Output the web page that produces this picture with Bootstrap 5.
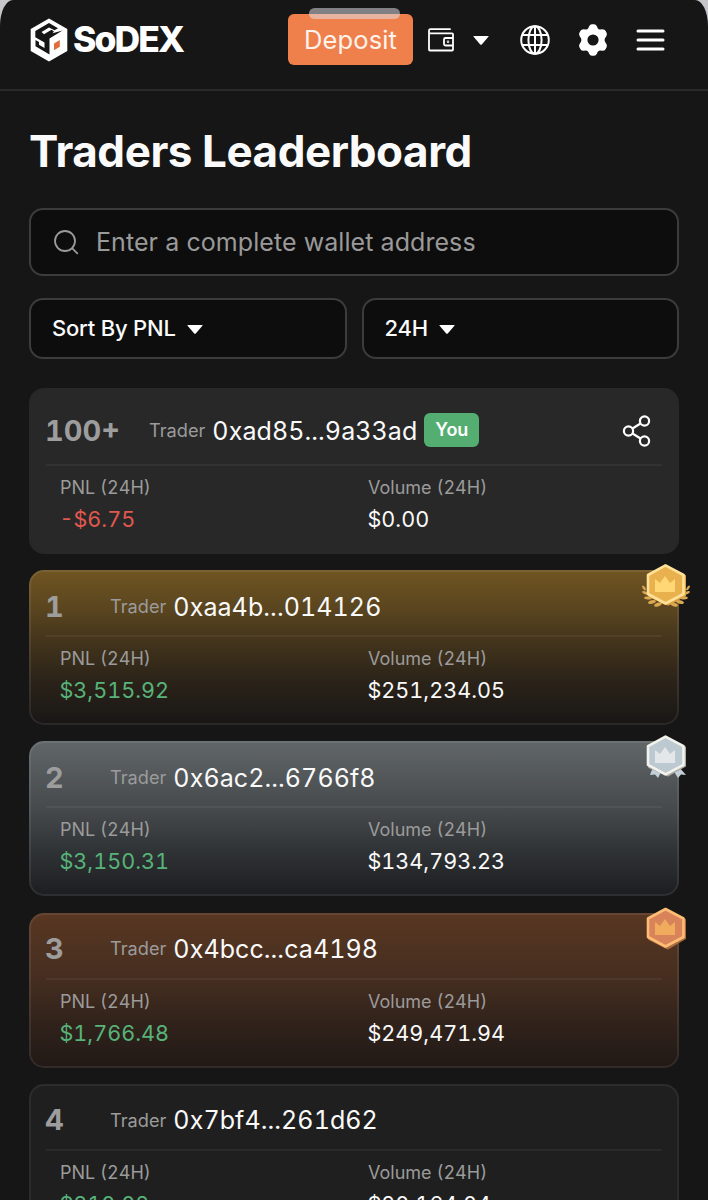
<!DOCTYPE html>
<html lang="en">
<head>
<meta charset="utf-8">
<meta name="viewport" content="width=device-width, initial-scale=1">
<title>SoDEX – Traders Leaderboard</title>
<link href="https://cdn.jsdelivr.net/npm/bootstrap@5.3.0/dist/css/bootstrap.min.css" rel="stylesheet">
<style>
html{background:#c6c5ca}
body{font-family:Inter,"Liberation Sans",sans-serif;background:#c6c5ca;color:#fafafa;height:1200px;overflow:hidden}
svg{display:block;flex:none}
.app{background:#161616;height:1200px;overflow:hidden;border-radius:13px 13px 0 0/26px 26px 0 0}
.topbar{height:91px;padding:0 43px 9px 30px;border-bottom:2px solid #2a2a2a}
.brand{font-weight:800;font-size:35.5px;letter-spacing:-1.9px;line-height:40px;color:#fff;margin-left:5px}
.deposit{position:relative;width:125px;height:51px;margin-top:-1px;background:#ef804b;color:#fdf3ec;border:0;border-radius:6px;font-size:25.5px;padding:0;line-height:51px;letter-spacing:.1px}
.grabber{position:absolute;left:21px;top:-6px;width:91px;height:11px;border-radius:6px;background:rgba(226,226,236,.52)}
.wallet{margin-left:15px}.open{margin-left:19px}.globe{margin-left:31px}.gear{margin-left:27px}.menu{margin-left:27px}
.page{padding:0 29px}
h1{font-size:44px;font-weight:700;line-height:54px;margin:33px 0 30px;letter-spacing:-.46px;white-space:nowrap}
.field{background:#0d0d0d;border:2px solid #3c3c3c;border-radius:14px}
.search{height:68px;padding-left:22px;font-size:25px;color:#9a9a9a}
.search span{margin-left:16px;padding-top:2px;letter-spacing:.07px}
.filters{gap:15px;margin:22px 0 29px}
.filters .field{height:61px;padding-left:21px;font-size:22px;font-weight:500;letter-spacing:-.2px;color:#fafafa}
.filters svg{margin-left:11px;margin-top:1px}
.trader{position:relative;height:155px;border:2px solid #2c2c2c;border-radius:15px;background:#1f1f1f;padding:0 15px;margin-bottom:16.25px;font-feature-settings:"tnum"}
.trader.me{height:166px;background:#282828;border-color:#282828;margin-bottom:16px}
.head{height:65px;padding-top:6px;border-bottom:2px solid rgba(255,255,255,.05)}
.me .head{height:76px;padding-top:8px}
.rank{font-weight:700;font-size:29px;min-width:36px;margin-left:-1px;margin-right:29px;color:#9d9d9d;line-height:34px}
.role{font-size:18.2px;color:#9b9b9b;margin-right:7px}
.addr{font-size:25px;letter-spacing:.08px;line-height:30px}
.you{background:#54ae71;color:#fff;font-size:18px;font-weight:600;border-radius:6px;width:55px;height:34px;line-height:34px;text-align:center;margin-left:7px;margin-top:-2px}
.stats>div{padding-left:14px}
.cap{font-size:18px;line-height:24px;color:#9b9b9b;margin-top:10px}
.val{font-size:21.6px;line-height:28px;margin-top:5px;margin-left:-.5px}
.up{color:#57b379}.down{color:#e0584f}
.gold,.silver,.bronze{border-color:rgba(255,255,255,.08)}
.gold{background:linear-gradient(#705522,#5a451f 25%,#44351c 45%,#2b2319 72%,#181616) border-box}
.silver{background:linear-gradient(#616669,#45494b 45%,#2f3234 72%,#1c1d20) border-box}
.bronze{background:linear-gradient(#593722,#452e20 42%,#30221b 72%,#211916) border-box}
.medal{position:absolute;right:-14px;top:-9px}
</style>
</head>
<body>
<svg width="0" height="0" class="position-absolute">
<symbol id="caret" viewBox="0 0 16 9"><path d="M1 0h14q1 0 .4.8L9 8.200q-1 1-2 0L.6.8Q0 0 1 0z" fill="#fff"/></symbol>
<symbol id="crown" viewBox="0 0 20 16"><path d="M0 3l5 4 5-7 5 7 5-4v13H0z"/></symbol>
</svg>
<div class="app">
<header class="topbar d-flex align-items-center">
  <svg width="38" height="44" viewBox="0 0 38 44"><path d="M19 .5L37.300 11v22L19 43.500.7 33V11z" fill="#fff"/><path d="M19 5L28 10.200 24.500 12.200 19 9.600 11.500 14 14 16.200 21.500 11.800 24 13.500 22.500 15.300 32.500 12.600 19.500 20.500V36.500L5.500 28.300V22L9 24v2.800l5.500 3.200V24.600L5.300 19.200V13z" fill="#161616"/><path d="M24 25.400l5.800-3.400v6.800L24 32.200z" fill="#e26a3c"/></svg>
  <span class="brand">SoDEX</span>
  <button class="btn deposit ms-auto">Deposit<span class="grabber"></span></button>
  <svg class="wallet" width="26" height="24" viewBox="0 0 26 24" fill="none" stroke="#fff" stroke-width="1.800" stroke-linejoin="round" stroke-linecap="round"><path d="M22 1.200H2.500Q1 1.200 1 3v18.500q0 1 1 1h22q1 0 1-1V6.300q0-1-1-1H1.500M25 10h-7.500q-1.500 0-1.500 1.500V16q0 1.500 1.500 1.500H25"/><circle cx="20" cy="13.800" r=".4"/></svg>
  <svg class="open" width="16" height="9"><use href="#caret"/></svg>
  <svg class="globe" width="30" height="30" viewBox="0 0 30 30" fill="none" stroke="#fff" stroke-width="2"><circle cx="15" cy="15" r="13.800"/><ellipse cx="15" cy="15" rx="6.600" ry="13.800"/><path d="M15 1v28M2.300 10h25.400M2.300 20h25.400"/></svg>
  <svg class="gear" width="32" height="32" viewBox="0 0 32 32"><path d="M12 2.600Q13 .3 15 .3h2q2 0 3 2.300l.6 1.400q.8 1.600 2.600 1.500l2.300-.2q2.200 0 3 1.500l1 1.800q1 1.900-.2 3.600l-1.200 1.700q-1.200 2.100 0 4.200l1.200 1.700q1.200 1.700.2 3.600l-1 1.800q-.8 1.500-3 1.500l-2.300-.2q-1.800-.1-2.600 1.500L20 29.400q-1 2.300-3 2.300h-2q-2 0-3-2.300L11.400 28q-.8-1.600-2.600-1.500l-2.300.2q-2.200 0-3-1.500l-1-1.800q-1-1.900.2-3.600l1.200-1.700q1.200-2.100 0-4.200l-1.200-1.700q-1.200-1.700-.2-3.600l1-1.800q.8-1.500 3-1.500l2.300.2q1.800.1 2.600-1.500zM16 10.400a5.600 5.600 0 1 0 0 11.200 5.600 5.600 0 0 0 0-11.200z" fill="#fff" fill-rule="evenodd"/></svg>
  <svg class="menu" width="29" height="24" viewBox="0 0 29 24" stroke="#fff" stroke-width="3" stroke-linecap="round"><path d="M2 3h25M2 12h25M2 21h25"/></svg>
</header>
<main class="page">
  <h1>Traders Leaderboard</h1>
  <div class="field search d-flex align-items-center">
    <svg width="27" height="27" viewBox="0 0 27 27" fill="none" stroke="#9a9a9a" stroke-width="1.800" stroke-linecap="round"><circle cx="12" cy="12" r="10"/><path d="M19.300 19.300l5 5"/></svg>
    <span>Enter a complete wallet address</span>
  </div>
  <div class="filters d-flex">
    <div class="field d-flex align-items-center flex-fill w-50">Sort By PNL<svg width="16" height="9"><use href="#caret"/></svg></div>
    <div class="field d-flex align-items-center flex-fill w-50">24H<svg width="16" height="9"><use href="#caret"/></svg></div>
  </div>

  <section class="trader me">
    <div class="head d-flex align-items-center"><span class="rank">100+</span><span class="role">Trader</span><span class="addr">0xad85...9a33ad</span><span class="you">You</span>
      <svg class="ms-auto me-2" width="32" height="34" viewBox="0 0 32 34" fill="none" stroke="#fff" stroke-width="2.200"><circle cx="6.500" cy="17" r="4.600"/><circle cx="22.500" cy="7" r="4.600"/><circle cx="22.500" cy="27" r="4.600"/><path d="M10.500 14.500l8-5M10.500 19.500l8 5"/></svg></div>
    <div class="row g-0 stats"><div class="col-6"><div class="cap">PNL (24H)</div><div class="val down">-$6.75</div></div><div class="col-6"><div class="cap">Volume (24H)</div><div class="val">$0.00</div></div></div>
  </section>

  <section class="trader gold">
    <div class="head d-flex align-items-center"><span class="rank">1</span><span class="role">Trader</span><span class="addr">0xaa4b...014126</span></div>
    <div class="row g-0 stats"><div class="col-6"><div class="cap">PNL (24H)</div><div class="val up">$3,515.92</div></div><div class="col-6"><div class="cap">Volume (24H)</div><div class="val">$251,234.05</div></div></div>
    <svg class="medal" width="50" height="46" viewBox="0 0 50 46"><g fill="#dca951"><ellipse cx="3" cy="25" rx="2.800" ry="1.200" transform="rotate(55 3 25)"/><ellipse cx="4.500" cy="30" rx="3.600" ry="1.400" transform="rotate(25 4.500 30)"/><ellipse cx="7" cy="35" rx="3.800" ry="1.500" transform="rotate(5 7 35)"/><ellipse cx="11" cy="39" rx="4" ry="1.700" transform="rotate(-15 11 39)"/><ellipse cx="17" cy="41.500" rx="4" ry="1.800" transform="rotate(-20 17 41.500)"/><ellipse cx="47" cy="25" rx="2.800" ry="1.200" transform="rotate(-55 47 25)"/><ellipse cx="45.500" cy="30" rx="3.600" ry="1.400" transform="rotate(-25 45.500 30)"/><ellipse cx="43" cy="35" rx="3.800" ry="1.500" transform="rotate(-5 43 35)"/><ellipse cx="39" cy="39" rx="4" ry="1.700" transform="rotate(15 39 39)"/><ellipse cx="33" cy="41.500" rx="4" ry="1.800" transform="rotate(20 33 41.500)"/></g><path d="M25.500 3.500L44 13v19.500L27 41.500 8 33z" fill="#dda345" stroke="#dda345" stroke-width="2" stroke-linejoin="round"/><path d="M24.500 2.300L42.500 12v19L24.500 40.500 7 31V12z" fill="#e9b04e" stroke="#ffe199" stroke-width="2.600" stroke-linejoin="round"/><use href="#crown" x="14" y="13" width="20" height="16" fill="#ffd774"/></svg>
  </section>

  <section class="trader silver">
    <div class="head d-flex align-items-center"><span class="rank">2</span><span class="role">Trader</span><span class="addr">0x6ac2...6766f8</span></div>
    <div class="row g-0 stats"><div class="col-6"><div class="cap">PNL (24H)</div><div class="val up">$3,150.31</div></div><div class="col-6"><div class="cap">Volume (24H)</div><div class="val">$134,793.23</div></div></div>
    <svg class="medal" width="50" height="46" viewBox="0 0 50 46"><path d="M12 33l-3 8 5-.5 3 3.500 4-8zM38 33l7 8-5-.5-3 3.500-5-8z" fill="#c3d0d8"/><path d="M25.500 4L44 13.500v18.500L27 41.500 8 33z" fill="#a9aaa5" stroke="#a9aaa5" stroke-width="2" stroke-linejoin="round"/><path d="M24.500 2.600L42.500 12.200v18.600L24.500 40.300 7 30.800V12.200z" fill="#bdc9d0" stroke="#f3f3ee" stroke-width="2.600" stroke-linejoin="round"/><use href="#crown" x="14" y="13" width="20" height="16" fill="#e4e7e9"/></svg>
  </section>

  <section class="trader bronze">
    <div class="head d-flex align-items-center"><span class="rank">3</span><span class="role">Trader</span><span class="addr">0x4bcc...ca4198</span></div>
    <div class="row g-0 stats"><div class="col-6"><div class="cap">PNL (24H)</div><div class="val up">$1,766.48</div></div><div class="col-6"><div class="cap">Volume (24H)</div><div class="val">$249,471.94</div></div></div>
    <svg class="medal" width="50" height="46" viewBox="0 0 50 46"><path d="M25.500 4.500L44 14v18.500L27 42.500 8 33z" fill="#a9693c" stroke="#a9693c" stroke-width="2" stroke-linejoin="round"/><path d="M24.500 3L42.500 12.500v18.500L24.500 40.500 7 31V12.500z" fill="#d9835a" stroke="#fdbd74" stroke-width="2.600" stroke-linejoin="round"/><use href="#crown" x="14" y="13" width="20" height="16" fill="#f0ac5c"/></svg>
  </section>

  <section class="trader">
    <div class="head d-flex align-items-center"><span class="rank">4</span><span class="role">Trader</span><span class="addr">0x7bf4...261d62</span></div>
    <div class="row g-0 stats"><div class="col-6"><div class="cap">PNL (24H)</div><div class="val up">$810.02</div></div><div class="col-6"><div class="cap">Volume (24H)</div><div class="val">$20,164.04</div></div></div>
  </section>
</main>
</div>
<script src="https://cdn.jsdelivr.net/npm/bootstrap@5.3.0/dist/js/bootstrap.bundle.min.js"></script>
</body>
</html>
